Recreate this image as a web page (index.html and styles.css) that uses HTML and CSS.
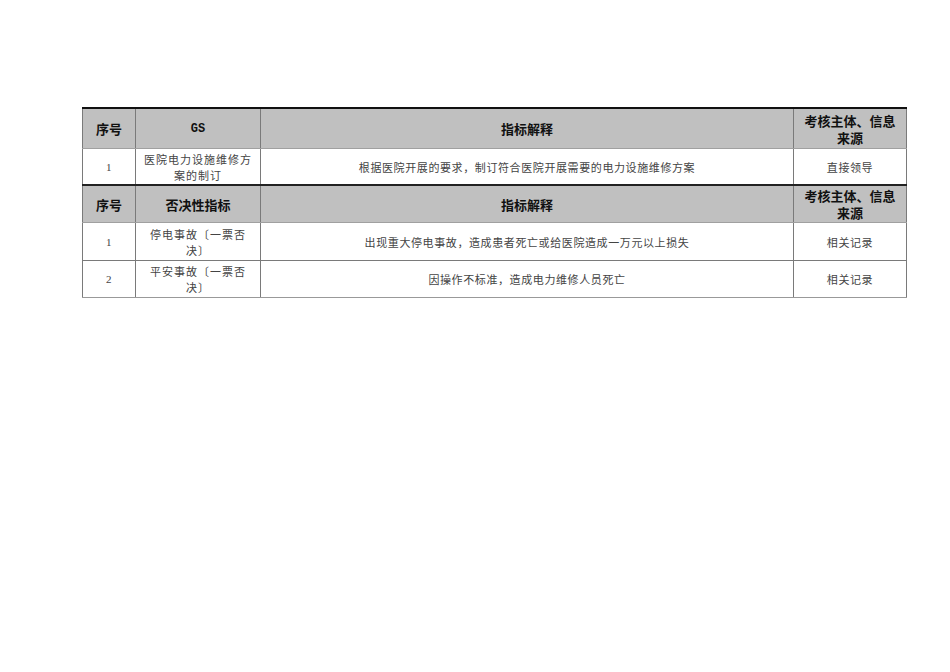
FILE: index.html
```html
<!DOCTYPE html>
<html lang="zh">
<head>
<meta charset="utf-8">
<link rel="stylesheet" href="styles.css">
</head>
<body>
<div class="page">
<table class="grid">
  <colgroup>
    <col class="c1"><col class="c2"><col class="c3"><col class="c4">
  </colgroup>
  <tr class="head first">
    <th>序号</th><th class="gs">GS</th><th>指标解释</th><th>考核主体、信息来源</th>
  </tr>
  <tr class="row r1">
    <td class="num">1</td><td class="name">医院电力设施维修方案的制订</td><td>根据医院开展的要求，制订符合医院开展需要的电力设施维修方案</td><td>直接领导</td>
  </tr>
  <tr class="head second">
    <th>序号</th><th>否决性指标</th><th>指标解释</th><th>考核主体、信息来源</th>
  </tr>
  <tr class="row r2">
    <td class="num">1</td><td class="name">停电事故〔一票否决〕</td><td>出现重大停电事故，造成患者死亡或给医院造成一万元以上损失</td><td>相关记录</td>
  </tr>
  <tr class="row r3">
    <td class="num">2</td><td class="name">平安事故〔一票否决〕</td><td>因操作不标准，造成电力维修人员死亡</td><td>相关记录</td>
  </tr>
</table>
</div>
</body>
</html>
```
FILE: styles.css
```css
html, body {
  margin: 0;
  padding: 0;
  background: #ffffff;
}
.page {
  padding: 107px 0 0 82px;
}
.grid {
  border-collapse: collapse;
  table-layout: fixed;
  width: 824px;
  font-family: "Noto Sans CJK SC", sans-serif;
}
.c1 { width: 53px; }
.c2 { width: 125px; }
.c3 { width: 533px; }
.c4 { width: 113px; }
.grid th, .grid td {
  border: 1px solid #7a7a7a;
  text-align: center;
  vertical-align: middle;
  padding: 0 6px;
}
.head th {
  background: #c0c0c0;
  color: #111;
  font-weight: bold;
  font-size: 13px;
  line-height: 17px;
  border-bottom-color: #a0a0a0;
}
.head.first th {
  border-top: 2px solid #111;
  height: 39px;
}
.head.second th {
  border-top: 2px solid #222;
  height: 36px;
}
.head th.gs {
  font-family: "Liberation Mono", monospace;
  font-weight: bold;
  font-size: 12px;
  line-height: 19px;
  padding-top: 2px;
  height: 37px;
}
.row td {
  color: #444;
  font-size: 11px;
  line-height: 16px;
  letter-spacing: 0.6px;
}
.row td.name {
  padding: 0 5px;
  letter-spacing: 1px;
}
.row td.num {
  font-family: "Liberation Serif", serif;
  font-size: 11px;
}
.r1 td { height: 35px; }
.r2 td { height: 37px; }
.r3 td { height: 36px; border-bottom-color: #999; }
```
